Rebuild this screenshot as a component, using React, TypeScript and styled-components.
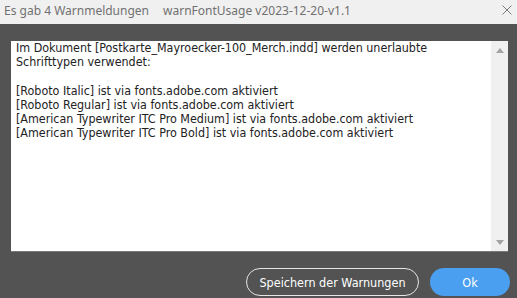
import styled, { createGlobalStyle } from "styled-components";

const GlobalStyle = createGlobalStyle`
  html, body {
    margin: 0;
    padding: 0;
    background: #535353;
  }
  #root {
    height: 298px;
  }
`;

const Window = styled.div`
  height: 298px;
  display: flex;
  flex-direction: column;
  background: #535353;
  overflow: hidden;
`;

const TitleBar = styled.div`
  height: 24px;
  flex-shrink: 0;
  display: flex;
  align-items: center;
  background: #f0f0f0;
  padding: 0 0 0 4px;
  font-family: "Noto Sans", "Open Sans", sans-serif;
  font-size: 12px;
  color: #717171;
`;

const TitlePart = styled.span<{ $gap?: number }>`
  margin-left: ${(p) => p.$gap ?? 0}px;
  white-space: nowrap;
  line-height: 1;
  padding-bottom: 2px;
`;

const CloseButton = styled.div`
  margin-left: auto;
  width: 20px;
  height: 24px;
  display: flex;
  align-items: center;
  justify-content: center;
  padding-bottom: 4px;
  box-sizing: border-box;
`;

const Body = styled.div`
  flex: 1;
  display: flex;
  flex-direction: column;
  padding: 17px 9px 2px 11px;
`;

const MessageBox = styled.div`
  height: 211px;
  display: flex;
  background: #ffffff;
  border-bottom: 1px solid #7a7a7a;
  box-sizing: border-box;
`;

const MessageText = styled.div`
  flex: 1;
  padding: 0 0 0 5px;
  font-family: "DejaVu Sans Condensed", "DejaVu Sans", sans-serif;
  font-stretch: condensed;
  font-size: 12.4px;
  line-height: 14.2px;
  color: #222;
  white-space: pre-wrap;
`;

const Scrollbar = styled.div`
  width: 17px;
  display: flex;
  flex-direction: column;
  justify-content: space-between;
  align-items: center;
  background: #f0f0f0;
  padding: 7px 0 6px;
`;

const Arrow = styled.div<{ $down?: boolean }>`
  width: 0;
  height: 0;
  border-left: 4px solid transparent;
  border-right: 4px solid transparent;
  ${(p) =>
    p.$down
      ? "border-top: 5px solid #a3a3a3;"
      : "border-bottom: 5px solid #a3a3a3;"}
`;

const Footer = styled.div`
  display: flex;
  justify-content: flex-end;
  gap: 11px;
  margin-top: 16px;
  margin-right: -2px;
`;

const Button = styled.button<{ $primary?: boolean }>`
  height: 28px;
  width: ${(p) => (p.$primary ? 80 : 173)}px;
  border-radius: 14px;
  box-sizing: border-box;
  border: ${(p) => (p.$primary ? "none" : "1px solid #e6e6e6")};
  background: ${(p) => (p.$primary ? "#4a9ff0" : "transparent")};
  color: #ffffff;
  font-family: "DejaVu Sans Condensed", "DejaVu Sans", sans-serif;
  font-stretch: condensed;
  font-size: 12.5px;
  padding: 0;
  cursor: pointer;
`;

const message = `Im Dokument [Postkarte_Mayroecker-100_Merch.indd] werden unerlaubte
Schrifttypen verwendet:

[Roboto Italic] ist via fonts.adobe.com aktiviert
[Roboto Regular] ist via fonts.adobe.com aktiviert
[American Typewriter ITC Pro Medium] ist via fonts.adobe.com aktiviert
[American Typewriter ITC Pro Bold] ist via fonts.adobe.com aktiviert`;

export default function App() {
  return (
    <>
      <GlobalStyle />
      <Window>
        <TitleBar>
          <TitlePart>Es gab 4 Warnmeldungen</TitlePart>
          <TitlePart $gap={14}>warnFontUsage v2023-12-20-v1.1</TitlePart>
          <CloseButton>
            <svg width="10" height="10" viewBox="0 0 10 10">
              <path d="M0.5 0.5 L9.5 9.5 M9.5 0.5 L0.5 9.5" stroke="#7a7a7a" strokeWidth="1" />
            </svg>
          </CloseButton>
        </TitleBar>
        <Body>
          <MessageBox>
            <MessageText>{message}</MessageText>
            <Scrollbar>
              <Arrow />
              <Arrow $down />
            </Scrollbar>
          </MessageBox>
          <Footer>
            <Button>Speichern der Warnungen</Button>
            <Button $primary>Ok</Button>
          </Footer>
        </Body>
      </Window>
    </>
  );
}
